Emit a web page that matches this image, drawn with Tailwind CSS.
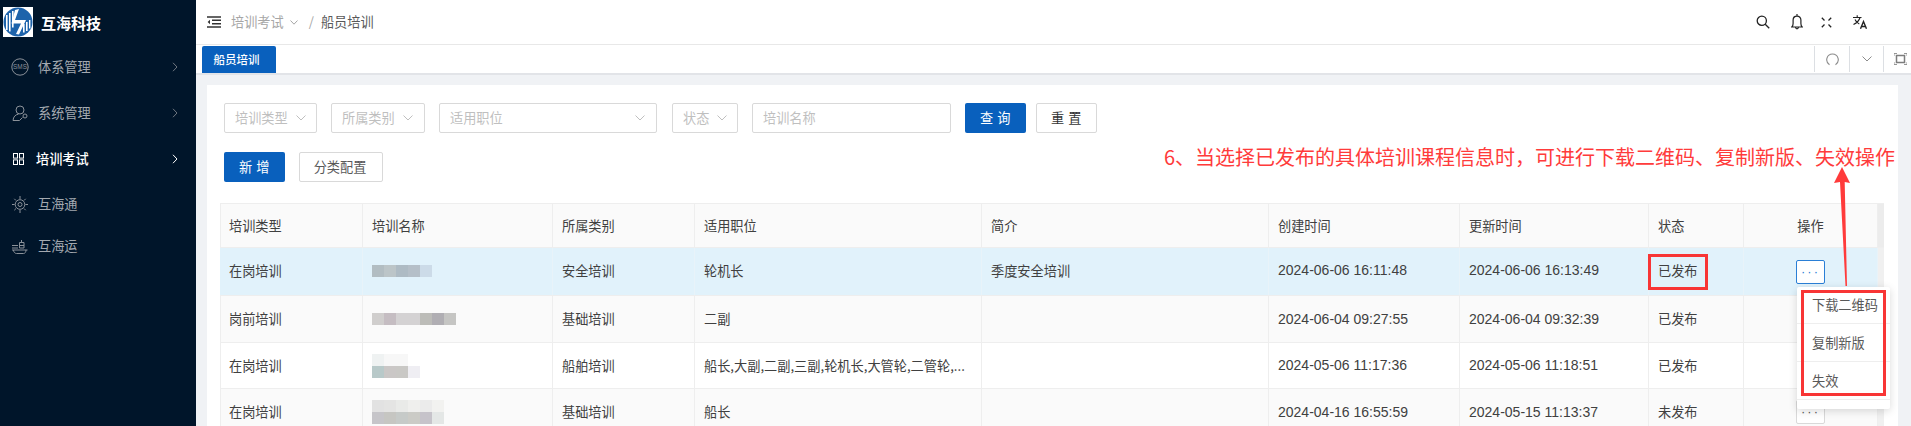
<!DOCTYPE html>
<html lang="zh">
<head>
<meta charset="utf-8">
<script src="https://cdn.jsdelivr.net/npm/@tailwindcss/browser@4"></script>
</head>
<body class="m-0">
<div class="relative flex h-[426px] w-[1911px] overflow-hidden bg-[#f0f2f5] font-['Noto_Sans_CJK_SC','Noto_Sans',sans-serif] text-[13.2px] text-[#404040]">

  <!-- sidebar -->
  <aside class="flex w-[196px] shrink-0 flex-col bg-[#00152a] text-[#a3a9b0]">
    <div class="flex h-[44px] items-center pl-[3px]">
      <svg class="h-[30px] w-[30px] shrink-0" viewBox="0 0 30 30">
        <rect width="30" height="30" fill="#fff"/>
        <circle cx="15" cy="15" r="14.500" fill="#1d63ab"/>
        <path d="M3 8h1.600v15H3zM6 6h1.600v18.600H6zM9 4h1.600v16.500H9z" fill="#fff"/>
        <path d="M12 3 16 2 12 13 23 13 16 27.500 13 27 18 16.500 8.500 16.500Z" fill="#fff"/>
        <path d="M20 17h1.600v8.500H20zM23 15h1.600v9H23zM26 13h1.400v8.500H26z" fill="#fff"/>
      </svg>
      <span class="ml-[8px] text-[15px] font-bold leading-none text-white">互海科技</span>
    </div>
    <nav class="flex flex-col">
      <div class="flex h-[46px] items-center pl-[11px] pr-[18px]">
        <svg class="h-[18px] w-[18px] shrink-0" viewBox="0 0 18 18" fill="none" stroke="#8b9199"><circle cx="9" cy="9" r="8.200"/><text x="9" y="11.400" text-anchor="middle" font-size="6.400" fill="#8b9199" stroke="none" font-family="Liberation Sans">SMS</text></svg>
        <span class="ml-[9px] flex-1">体系管理</span>
        <svg class="h-[10px] w-[6px]" viewBox="0 0 6 10" fill="none" stroke="#6f7780" stroke-width="1"><path d="M1 .8 5 5 1 9.200"/></svg>
      </div>
      <div class="flex h-[46px] items-center pl-[12px] pr-[18px]">
        <svg class="h-[17px] w-[16px] shrink-0" viewBox="0 0 16 17" fill="none" stroke="#8b9199" stroke-width="1"><circle cx="8" cy="5" r="4"/><path d="M1 15.500c.3-3.800 2.500-6 5.500-6.300M1 15.500h6.500l3-3"/><circle cx="13" cy="11" r="2"/></svg>
        <span class="ml-[10px] flex-1">系统管理</span>
        <svg class="h-[10px] w-[6px]" viewBox="0 0 6 10" fill="none" stroke="#6f7780" stroke-width="1"><path d="M1 .8 5 5 1 9.200"/></svg>
      </div>
      <div class="flex h-[46px] items-center pl-[13px] pr-[18px] text-white">
        <svg class="h-[12px] w-[11px] shrink-0" viewBox="0 0 11 12" fill="none" stroke="#fff" stroke-width="1"><rect x=".5" y=".5" width="4" height="4.600"/><rect x="6.500" y=".5" width="4" height="4.600"/><rect x=".5" y="6.900" width="4" height="4.600"/><rect x="6.500" y="6.900" width="4" height="4.600"/></svg>
        <span class="ml-[12px] flex-1 font-medium">培训考试</span>
        <svg class="h-[10px] w-[6px]" viewBox="0 0 6 10" fill="none" stroke="#fff" stroke-width="1"><path d="M1 .8 5 5 1 9.200"/></svg>
      </div>
      <div class="flex h-[44px] items-center pl-[12px]">
        <svg class="h-[17px] w-[16px] shrink-0" viewBox="0 0 16 17" fill="none" stroke="#8b9199" stroke-width="1"><circle cx="8" cy="8.500" r="4.800"/><circle cx="8" cy="8.500" r="2"/><path d="M8 0v3M8 14v3M0 8.500h2.600M13.400 8.500h2.600M2.300 2.800l1.700 1.700M12 12.500l1.700 1.700M13.700 2.800 12 4.500M4 12.500l-1.700 1.700"/></svg>
        <span class="ml-[10px]">互海通</span>
      </div>
      <div class="flex h-[40px] items-center pl-[12px]">
        <svg class="h-[15px] w-[16px] shrink-0" viewBox="0 0 16 15" fill="none" stroke="#8b9199" stroke-width="1"><path d="M0 6.500h6M0 9h6M0 11h15.500M1.500 11c0 2 1.500 3.500 3 3.500h7c1.500 0 2.500-1.500 2.500-3.500M7.500 9V3.500h4.500V9zM9.500 3.500V1M7.500 6.500H12"/></svg>
        <span class="ml-[10px]">互海运</span>
      </div>
    </nav>
  </aside>

  <!-- main -->
  <main class="flex min-w-0 flex-1 flex-col">
    <header class="flex h-[45px] shrink-0 items-center border-b border-[#e8e8e8] bg-white pl-[11px]">
      <svg class="h-[12px] w-[14px] shrink-0" viewBox="0 0 14 12" fill="none" stroke="#333" stroke-width="1.400"><path d="M0 1h14M5 4.300h9M5 7.700h9M0 11h14"/><path d="M3 3.800 .6 6 3 8.200Z" fill="#333" stroke="none"/></svg>
      <span class="ml-[10px] text-[#a6a6a6]">培训考试</span>
      <svg class="ml-[6px] h-[5px] w-[8px]" viewBox="0 0 8 5" fill="none" stroke="#a6a6a6"><path d="M.5.5 4 4.200 7.500.5"/></svg>
      <span class="ml-[11px] text-[#a6a6a6]">/</span>
      <span class="ml-[7px] text-[#595959]">船员培训</span>
      <div class="ml-auto flex items-center pr-[44px]">
        <svg class="h-[14px] w-[14px]" viewBox="0 0 14 14" fill="none" stroke="#222" stroke-width="1.300"><circle cx="5.800" cy="5.800" r="4.600"/><path d="m9.200 9.200 4 4"/></svg>
        <svg class="ml-[21px] h-[16px] w-[12px]" viewBox="0 0 12 16" fill="none" stroke="#222" stroke-width="1.200"><path d="M.8 13h10.400c-1-1-1.300-2-1.300-3.500V6c0-2.200-1.500-3.800-3.900-3.800S2.100 3.800 2.100 6v3.500C2.100 11 1.800 12 .8 13ZM6 0v2.200M4.600 13.500c.2 1.700 2.600 1.700 2.800 0"/></svg>
        <svg class="ml-[18px] h-[11px] w-[11px]" viewBox="0 0 11 11" fill="none" stroke="#222" stroke-width="1.300"><path d="M.8.800 3.500 3.500M10.200.800 7.500 3.500M.8 10.200 3.500 7.500M10.200 10.200 7.500 7.500"/></svg>
        <svg class="ml-[21px] h-[14px] w-[14px]" viewBox="0 0 14 14" fill="none" stroke="#222" stroke-width="1.100"><path d="M0 2.500h8.500M4.200.3v2.200M7 2.500C6.200 5.500 3.800 8 .5 9.500M2 4.500c.8 2 2.300 3.500 4.300 4.600"/><path d="M7.500 13.800 10.500 6.500 13.500 13.800M8.500 11.500h4" stroke-width="1.400"/></svg>
      </div>
    </header>

    <div class="flex h-[30px] shrink-0 items-stretch border-b-2 border-[#e2e4e8] bg-white pl-[6px]">
      <div class="mt-[1px] flex h-[27px] w-[74px] items-center justify-center rounded-t-[2px] bg-[#0960bd] pr-[5px] text-[11.500px] font-medium text-white">船员培训</div>
      <div class="mb-[1px] ml-auto mt-[1px] flex">
        <div class="flex w-[35px] items-center justify-center border-l border-[#dcdfe3]">
          <svg class="h-[13px] w-[13px]" viewBox="0 0 13 13" fill="none" stroke="#8c8c8c" stroke-width="1.100"><path d="M3.500 11.700C-1.500 8.500.8 1 6.500 1s8 7.500 3 10.700"/></svg>
        </div>
        <div class="flex w-[34px] items-center justify-center border-l border-[#dcdfe3]">
          <svg class="h-[6px] w-[10px]" viewBox="0 0 10 6" fill="none" stroke="#8c8c8c" stroke-width="1"><path d="M.5.500 5 5 9.500.5"/></svg>
        </div>
        <div class="flex w-[28px] items-center justify-start border-l border-[#dcdfe3] pl-[10px]">
          <svg class="h-[12px] w-[13px]" viewBox="0 0 13 12" fill="none" stroke="#7d7d7d" stroke-width="1"><rect x="2.500" y="2.500" width="8" height="7" stroke-width="1.500"/><path d="M0 3V.5h3M10 .5h3V3M0 9v2.500h3M10 11.500h3V9" stroke-width=".8"/></svg>
        </div>
      </div>
    </div>

    <div class="min-h-0 flex-1 pl-[11px] pr-[13px] pt-[10px]">
      <section class="h-full bg-white pl-[13px] pt-[18px]">
        <div class="ml-[4px] flex h-[30px] items-stretch text-[#bfbfbf]">
          <div class="flex w-[93px] items-center justify-between rounded-[2px] border border-[#d9d9d9] pl-[10px] pr-[10px]">培训类型<svg class="h-[6px] w-[10px]" viewBox="0 0 10 6" fill="none" stroke="#bfbfbf"><path d="M.5.500 5 5 9.500.5"/></svg></div>
          <div class="ml-[14px] flex w-[94px] items-center justify-between rounded-[2px] border border-[#d9d9d9] pl-[10px] pr-[11px]">所属类别<svg class="h-[6px] w-[10px]" viewBox="0 0 10 6" fill="none" stroke="#bfbfbf"><path d="M.5.500 5 5 9.500.5"/></svg></div>
          <div class="ml-[14px] flex w-[218px] items-center justify-between rounded-[2px] border border-[#d9d9d9] pl-[10px] pr-[11px]">适用职位<svg class="h-[6px] w-[10px]" viewBox="0 0 10 6" fill="none" stroke="#bfbfbf"><path d="M.5.500 5 5 9.500.5"/></svg></div>
          <div class="ml-[15px] flex w-[66px] items-center justify-between rounded-[2px] border border-[#d9d9d9] pl-[10px] pr-[10px]">状态<svg class="h-[6px] w-[10px]" viewBox="0 0 10 6" fill="none" stroke="#bfbfbf"><path d="M.5.500 5 5 9.500.5"/></svg></div>
          <div class="ml-[14px] flex w-[199px] items-center rounded-[2px] border border-[#d9d9d9] pl-[10px]">培训名称</div>
          <button class="ml-[14px] flex w-[61px] items-center justify-center rounded-[2px] bg-[#0960bd] tracking-[0.6px] text-white">查 询</button>
          <button class="ml-[10px] flex w-[61px] items-center justify-center rounded-[2px] border border-[#d9d9d9] tracking-[0.6px] text-[#333]">重 置</button>
        </div>
        <div class="ml-[4px] mt-[19px] flex h-[30px] items-stretch">
          <button class="flex w-[61px] items-center justify-center rounded-[2px] bg-[#0960bd] tracking-[0.6px] text-white">新 增</button>
          <button class="ml-[14px] flex w-[84px] items-center justify-center rounded-[2px] border border-[#d9d9d9] pr-[2px] text-[#595959]">分类配置</button>
        </div>

        <div class="mt-[21px] w-[1664px]">
          <div class="grid h-[45px] grid-cols-[143px_190px_142px_287px_287px_191px_189px_95px_134px_6px] border-b border-t border-[#eeeeee] bg-[#fafafa] [&>div]:flex [&>div]:items-center [&>div]:border-r [&>div]:border-[#eeeeee] [&>div]:pl-[9px]">
            <div class="border-l !pl-[8px]">培训类型</div><div>培训名称</div><div>所属类别</div><div>适用职位</div><div>简介</div><div>创建时间</div><div>更新时间</div><div>状态</div><div class="justify-center !pl-0">操作</div><div class="!border-r-0 !pl-0 bg-[#ececec]"></div>
          </div>

          <div class="grid h-[47px] grid-cols-[143px_190px_142px_287px_287px_191px_189px_95px_134px_6px] bg-[#e1f2fb] [&>div]:flex [&>div]:items-center [&>div]:border-r [&>div]:border-[#e8f3f9] [&>div]:pl-[9px] [&>div]:pb-[2px]">
            <div>在岗培训</div>
            <div><div class="flex h-[12px] !pl-0"><i class="w-[12px] bg-[#b2bdc2]"></i><i class="w-[12px] bg-[#bcc5c8]"></i><i class="w-[12px] bg-[#aebbc4]"></i><i class="w-[12px] bg-[#b5bfc8]"></i><i class="w-[12px] bg-[#ccdbe8]"></i></div></div>
            <div>安全培训</div><div>轮机长</div><div>季度安全培训</div><div class="font-['Liberation_Sans'] text-[14px]">2024-06-06 16:11:48</div><div class="font-['Liberation_Sans'] text-[14px]">2024-06-06 16:13:49</div><div>已发布</div>
            <div class="justify-center !pl-0 !pb-0"><span class="flex h-[24px] w-[29px] items-center justify-center rounded-[2px] border border-[#2a7fd6] bg-white font-['Liberation_Sans'] text-[13px] tracking-[2px] text-[#2a7fd6]">···</span></div>
            <div class="!border-r-0 !pl-0 bg-[#f0f0f0]"></div>
          </div>

          <div class="grid h-[47px] grid-cols-[143px_190px_142px_287px_287px_191px_189px_95px_134px_6px] border-t border-[#eeeeee] bg-[#fafafa] [&>div]:flex [&>div]:items-center [&>div]:border-r [&>div]:border-[#eeeeee] [&>div]:pl-[9px]">
            <div class="border-l !pl-[8px]">岗前培训</div>
            <div><div class="flex h-[12px]"><i class="w-[12px] bg-[#d0cecd]"></i><i class="w-[12px] bg-[#c5bdc2]"></i><i class="w-[12px] bg-[#d4d2d3]"></i><i class="w-[12px] bg-[#d4d2d3]"></i><i class="w-[12px] bg-[#bcbcb8]"></i><i class="w-[12px] bg-[#b0aeb3]"></i><i class="w-[12px] bg-[#c5c5c3]"></i></div></div>
            <div>基础培训</div><div>二副</div><div></div><div class="font-['Liberation_Sans'] text-[14px]">2024-06-04 09:27:55</div><div class="font-['Liberation_Sans'] text-[14px]">2024-06-04 09:32:39</div><div>已发布</div><div></div><div class="!border-r-0 !pl-0 bg-[#f0f0f0]"></div>
          </div>

          <div class="grid h-[46px] grid-cols-[143px_190px_142px_287px_287px_191px_189px_95px_134px_6px] border-t border-[#eeeeee] bg-white [&>div]:flex [&>div]:items-center [&>div]:border-r [&>div]:border-[#eeeeee] [&>div]:pl-[9px]">
            <div class="border-l !pl-[8px]">在岗培训</div>
            <div><div class="flex flex-col"><div class="flex h-[12px]"><i class="w-[12px] bg-[#eff2f2]"></i><i class="w-[12px] bg-[#f7f7f7]"></i><i class="w-[12px] bg-[#f7f7f7]"></i></div><div class="flex h-[12px]"><i class="w-[12px] bg-[#b8c9c9]"></i><i class="w-[12px] bg-[#cac7c6]"></i><i class="w-[12px] bg-[#c9c8c5]"></i><i class="w-[12px] bg-[#efeef3]"></i></div></div></div>
            <div>船舶培训</div><div>船长,大副,二副,三副,轮机长,大管轮,二管轮,...</div><div></div><div class="font-['Liberation_Sans'] text-[14px]">2024-05-06 11:17:36</div><div class="font-['Liberation_Sans'] text-[14px]">2024-05-06 11:18:51</div><div>已发布</div><div></div><div class="!border-r-0 !pl-0 bg-[#f0f0f0]"></div>
          </div>

          <div class="grid h-[47px] grid-cols-[143px_190px_142px_287px_287px_191px_189px_95px_134px_6px] border-t border-[#eeeeee] bg-[#fafafa] [&>div]:flex [&>div]:items-center [&>div]:border-r [&>div]:border-[#eeeeee] [&>div]:pl-[9px]">
            <div class="border-l !pl-[8px]">在岗培训</div>
            <div><div class="flex flex-col"><div class="flex h-[12px]"><i class="w-[12px] bg-[#e2e2e2]"></i><i class="w-[12px] bg-[#e4e4e3]"></i><i class="w-[12px] bg-[#e9eae8]"></i><i class="w-[12px] bg-[#efefed]"></i><i class="w-[12px] bg-[#ebebeb]"></i><i class="w-[12px] bg-[#f2f2f0]"></i></div><div class="flex h-[12px]"><i class="w-[12px] bg-[#c6c5c9]"></i><i class="w-[12px] bg-[#c6c6c2]"></i><i class="w-[12px] bg-[#c6cac8]"></i><i class="w-[12px] bg-[#cbcbc6]"></i><i class="w-[12px] bg-[#c6c3ca]"></i><i class="w-[12px] bg-[#e4e7e6]"></i></div></div></div>
            <div>基础培训</div><div>船长</div><div></div><div class="font-['Liberation_Sans'] text-[14px]">2024-04-16 16:55:59</div><div class="font-['Liberation_Sans'] text-[14px]">2024-05-15 11:13:37</div><div>未发布</div>
            <div class="justify-center !pl-0"><span class="flex h-[24px] w-[29px] items-center justify-center rounded-[2px] border border-[#d9d9d9] bg-white font-['Liberation_Sans'] text-[13px] tracking-[2px] text-[#595959]">···</span></div>
            <div class="!border-r-0 !pl-0 bg-[#f0f0f0]"></div>
          </div>
        </div>
      </section>
    </div>
  </main>

  <!-- dropdown menu over the table -->
  <div class="absolute left-[1797px] top-[287px] w-[93px] rounded-[2px] bg-white text-[#595959] shadow-[0_2px_8px_rgba(0,0,0,0.15)]">
    <div class="flex h-[37px] items-center border-b border-[#eeeeee] pl-[15px]">下载二维码</div>
    <div class="flex h-[38px] items-center border-b border-[#eeeeee] pl-[15px]">复制新版</div>
    <div class="flex h-[38px] items-center border-b border-[#eeeeee] pl-[15px]">失效</div>
    <div class="h-[9px]"></div>
  </div>

  <!-- annotation layer -->
  <div class="absolute left-[1164px] top-[143px] whitespace-nowrap text-[20px] leading-[28px] text-[#ff3b3b]">6、当选择已发布的具体培训课程信息时，可进行下载二维码、复制新版、失效操作</div>
  <div class="absolute left-[1648px] top-[254px] h-[36px] w-[60px] border-[3px] border-[#f83535]"></div>
  <div class="absolute left-[1801px] top-[290px] h-[106px] w-[85px] border-[3px] border-[#f83535]"></div>
  <svg class="absolute left-[1830px] top-[164px] h-[124px] w-[24px]" viewBox="0 0 24 124"><path d="M12 3 20 19 14.700 18 17 122 15.500 122 10 18 4 19Z" fill="#ff3b3b"/></svg>
</div>
</body>
</html>
